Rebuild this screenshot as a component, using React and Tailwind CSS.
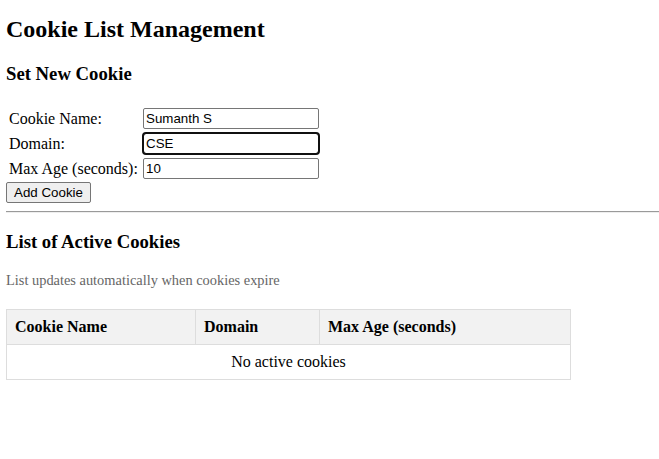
import React from "react";

function App() {
    const inputClass =
        "w-[176px] h-[21px] border border-[#767676] rounded-[2px] px-[2px] bg-white text-[13.33px] font-['Liberation_Sans',Arial,sans-serif] text-black";

    return (
        <div className="min-h-screen bg-white px-[6px] pt-[15px] font-['Liberation_Serif','Times_New_Roman',serif] text-base text-black">
            <h2 className="text-[24px] font-bold leading-[28px]">Cookie List Management</h2>

            <h3 className="mt-[20px] text-[18.72px] font-bold leading-[22px]">Set New Cookie</h3>

            <table className="mt-[20px] border-separate border-spacing-[2px]">
                <tbody>
                    <tr>
                        <td className="w-[132px] p-px leading-[18px]">Cookie Name:</td>
                        <td className="p-px">
                            <input type="text" defaultValue="Sumanth S" className={inputClass + " block"} />
                        </td>
                    </tr>
                    <tr>
                        <td className="p-px leading-[18px]">Domain:</td>
                        <td className="p-px">
                            <input
                                type="text"
                                defaultValue="CSE"
                                className={inputClass + " block outline-2 outline-[#101010] outline-offset-[-1px] rounded-[3px]"}
                            />
                        </td>
                    </tr>
                    <tr>
                        <td className="p-px leading-[18px]">Max Age (seconds):</td>
                        <td className="p-px">
                            <input type="text" defaultValue="10" className={inputClass + " block"} />
                        </td>
                    </tr>
                </tbody>
            </table>

            <div className="flex">
                <button className="h-[21px] w-[85px] border border-[#767676] rounded-[2px] bg-[#efefef] text-[13.33px] font-['Liberation_Sans',Arial,sans-serif] text-black">
                    Add Cookie
                </button>
            </div>

            <hr className="mt-[8px] -mr-[6px] h-[2px] border-t border-b border-t-[#9a9a9a] border-b-[#eeeeee]" />

            <h3 className="mt-[18px] text-[18.72px] font-bold leading-[22px]">List of Active Cookies</h3>

            <p className="mt-[19px] text-[14.4px] leading-[16px] text-[#666666]">
                List updates automatically when cookies expire
            </p>

            <table className="mt-[21px] w-[565px] table-fixed border-collapse">
                <thead>
                    <tr className="bg-[#f2f2f2]">
                        <th className="w-[189px] border border-[#dddddd] p-2 text-left font-bold leading-[18px]">Cookie Name</th>
                        <th className="w-[124px] border border-[#dddddd] p-2 text-left font-bold leading-[18px]">Domain</th>
                        <th className="border border-[#dddddd] p-2 text-left font-bold leading-[18px]">Max Age (seconds)</th>
                    </tr>
                </thead>
                <tbody>
                    <tr>
                        <td colSpan={3} className="border border-[#dddddd] p-2 text-center leading-[18px]">
                            No active cookies
                        </td>
                    </tr>
                </tbody>
            </table>
        </div>
    );
}

export default App;
